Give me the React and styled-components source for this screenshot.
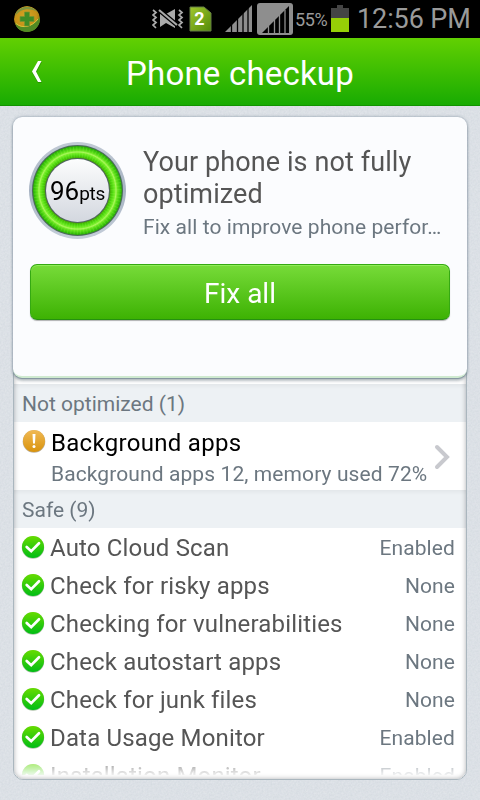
import React from "react";
import styled, { createGlobalStyle } from "styled-components";

const GlobalStyle = createGlobalStyle`
  * {
    box-sizing: border-box;
  }
  body {
    margin: 0;
    font-family: Roboto, "Noto Sans", sans-serif;
  }
`;

const grain = `url("data:image/svg+xml,%3Csvg xmlns='http://www.w3.org/2000/svg' width='120' height='120'%3E%3Cfilter id='n'%3E%3CfeTurbulence type='fractalNoise' baseFrequency='.55' numOctaves='2' stitchTiles='stitch'/%3E%3CfeColorMatrix values='0 0 0 0 .45 0 0 0 0 .52 0 0 0 0 .58 .5 0 0 0 -.1'/%3E%3C/filter%3E%3Crect width='120' height='120' filter='url(%23n)' opacity='.7'/%3E%3C/svg%3E")`;

const Screen = styled.div`
  width: 480px;
  height: 800px;
  overflow: hidden;
  display: flex;
  flex-direction: column;
  background: ${grain} #e0e4e9;
`;

const StatusBar = styled.div`
  flex: none;
  height: 38px;
  display: flex;
  align-items: center;
  padding: 0 10px 0 14px;
  background: #000;
  color: #9a9a9a;

  svg {
    flex: none;
    display: block;
  }
`;

const StatusIcons = styled.div`
  display: flex;
  align-items: center;
  margin-left: auto;
`;

const Gap = styled.div`
  width: ${(props) => props.$size}px;
`;

const BatteryText = styled.span`
  width: 38px;
  font-size: 18px;
  line-height: 38px;
  letter-spacing: -0.4px;
  padding: 2px 0 0 2px;
`;

const Clock = styled.span`
  width: 113px;
  margin-left: 8px;
  font-size: 27px;
  line-height: 38px;
  white-space: nowrap;
  letter-spacing: -0.1px;
`;

const Header = styled.header`
  flex: none;
  height: 68px;
  display: grid;
  grid-template-columns: 74px 332px 74px;
  align-items: center;
  background: linear-gradient(#62d002, #18ab02);
  border-bottom: 1px solid #129300;

  svg {
    margin: 0 0 0 30px;
  }
`;

const Title = styled.h1`
  margin: 0;
  padding-top: 5px;
  color: #fff;
  font-size: 33px;
  font-weight: 400;
  line-height: 40px;
  text-align: center;
  white-space: nowrap;
  letter-spacing: 0.2px;
`;

const Card = styled.section`
  flex: none;
  position: relative;
  z-index: 1;
  height: 261px;
  margin: 11px 13px 0;
  padding: 25px 17px 0;
  background: #fbfcfe;
  border-radius: 9px;
  border-bottom: 2px solid #cfead0;
  box-shadow: 0 1px 0 #8798a2, 0 0 3px rgba(90, 110, 130, 0.65),
    0 3px 3px rgba(60, 80, 90, 0.35);
`;

const Summary = styled.div`
  display: flex;
  height: 122px;
`;

const Score = styled.div`
  flex: none;
  width: 97px;
  height: 97px;
  display: grid;
  margin-left: -1px;

  > * {
    grid-area: 1 / 1;
  }
`;

const ScoreText = styled.div`
  display: flex;
  align-items: baseline;
  justify-content: center;
  align-self: center;
  color: #000;
  font-size: 26px;
  line-height: 30px;
  padding-top: 4px;

  small {
    font-size: 19px;
    letter-spacing: -0.3px;
  }
`;

const Message = styled.div`
  min-width: 0;
  margin-left: 17px;
`;

const Headline = styled.h2`
  margin: 4px 0 0;
  color: #555;
  font-size: 27px;
  font-weight: 400;
  line-height: 32px;
  letter-spacing: 0.1px;
`;

const Hint = styled.p`
  margin: 5px 0 0;
  color: #6c7780;
  font-size: 21px;
  line-height: 24px;
  white-space: nowrap;
  letter-spacing: 0.07px;
`;

const FixButton = styled.button`
  display: block;
  width: 420px;
  height: 56px;
  padding: 3px 0 0;
  border: 1px solid #35a912;
  border-bottom-color: #259010;
  border-radius: 7px;
  background: linear-gradient(#77db39, #3db203);
  box-shadow: inset 0 1px 0 #8fec58, 0 1px 1px rgba(0, 0, 0, 0.3);
  color: #fff;
  font: 28px Roboto, sans-serif;
  letter-spacing: 0;
`;

const Panel = styled.section`
  flex: none;
  position: relative;
  width: 454px;
  height: 410px;
  margin: -8px 13px 0;
  padding: 13px 0 0;
  overflow: hidden;
  background: #fff;
  border: 1px solid #aab6be;
  border-radius: 0 0 10px 10px;

  &::after {
    content: "";
    position: absolute;
    inset: 0;
    border-radius: 0 0 9px 9px;
    box-shadow: inset 0 0 5px rgba(70, 75, 80, 0.45);
  }
`;

const List = styled.div`
  height: 391px;
  overflow: hidden;
  mask-image: linear-gradient(#000 368px, transparent 393px);
`;

const SectionHeader = styled.h3`
  height: 38px;
  margin: 0;
  padding: 3px 8px 0;
  background: linear-gradient(#e3e7ea, #edf1f4 5px);
  color: #6c7780;
  font-size: 21px;
  font-weight: 400;
  line-height: 35px;
  letter-spacing: 0;
`;

const IssueRow = styled.div`
  display: flex;
  height: 68px;
  padding: 7px 16px 0 8px;

  > svg {
    flex: none;
  }
`;

const IssueText = styled.div`
  flex: 1;
  min-width: 0;
  margin: -1px 0 0 5px;
  white-space: nowrap;
`;

const IssueName = styled.div`
  color: #000;
  font-size: 24px;
  line-height: 30px;
  letter-spacing: 0.3px;
`;

const IssueDetail = styled.div`
  color: #6c7780;
  font-size: 21px;
  line-height: 32px;
  letter-spacing: 0.1px;
`;

const IssueArrow = styled.svg`
  margin-top: 15px;
`;

const SafeRow = styled.div`
  display: flex;
  align-items: center;
  height: 38px;
  padding: 0 11px 0 7px;
`;

const SafeName = styled.span`
  flex: 1;
  margin-left: 5px;
  padding-top: 1px;
  color: #555;
  font-size: 24px;
  line-height: 32px;
  letter-spacing: 0.16px;
`;

const SafeState = styled.span`
  padding-top: 2px;
  color: #6c7780;
  font-size: 21px;
  line-height: 32px;
  letter-spacing: 0.1px;
`;

const safeItems = [
  { name: "Auto Cloud Scan", state: "Enabled" },
  { name: "Check for risky apps", state: "None" },
  { name: "Checking for vulnerabilities", state: "None" },
  { name: "Check autostart apps", state: "None" },
  { name: "Check for junk files", state: "None" },
  { name: "Data Usage Monitor", state: "Enabled" },
  { name: "Installation Monitor", state: "Enabled" },
];

const ShieldIcon = () => (
  <svg width="26" height="26" viewBox="0 0 26 26">
    <defs>
      <radialGradient id="gold" cx=".45" cy=".4" r=".6">
        <stop offset="0" stopColor="#d3a526" />
        <stop offset=".7" stopColor="#c69117" />
        <stop offset="1" stopColor="#8b7814" />
      </radialGradient>
      <clipPath id="ball">
        <circle cx="13" cy="13" r="13" />
      </clipPath>
    </defs>
    <g clipPath="url(#ball)">
      <circle cx="13" cy="13" r="13" fill="url(#gold)" />
      <path d="M1 10C3 0 16-3 24 6C15 1 6 3 1 10Z" fill="#7f9440" />
      <path d="M1 17C7 24 18 22 26 11V27H4Z" fill="#518b24" />
      <path d="M2 17.500C8 23 18 21 24 13" fill="none" stroke="#d8c43c" />
      <path
        d="M10.500 6h5v4.500h4.500v5h-4.500V20h-5v-4.500H6v-5h4.500Z"
        fill="#3f8c25"
        stroke="#7b9430"
        strokeWidth=".7"
      />
    </g>
  </svg>
);

const MutedIcon = () => (
  <svg width="33" height="22" viewBox="0 0 33 22">
    <g fill="none" stroke="#aaa" strokeWidth="1.7">
      <path d="M1 2l3 2.500L1 7l3 2.500L1 12l3 2.500L1 17l3 3" />
      <path d="M27 2l3 2.500L27 7l3 2.500L27 12l3 2.500L27 17l3 3" />
    </g>
    <path d="M8 6h6l9-5v19l-9-5-6 4Z" fill="#aaa" />
    <path d="M7 2l18 15" stroke="#000" strokeWidth="4.500" />
    <path d="M7 2l18 15" stroke="#aaa" strokeWidth="2.200" />
  </svg>
);

const SimIcon = () => (
  <svg width="23" height="26" viewBox="0 0 23 26">
    <defs>
      <linearGradient id="sim" x2="1" y2="1">
        <stop stopColor="#a1c72d" />
        <stop offset="1" stopColor="#548b08" />
      </linearGradient>
    </defs>
    <path d="M1 1h14l7 6v18H1Z" fill="url(#sim)" stroke="#657c46" />
    <text x="10.500" y="19" textAnchor="middle" fill="#fff" fontSize="18" fontWeight="700">
      2
    </text>
  </svg>
);

const SignalIcon = () => (
  <svg width="28" height="28" viewBox="0 0 28 28">
    <path d="M0 27L27 0v27Z" fill="#8e8e8e" />
    <path d="M6.500 19v9M12.500 13v15M18 7v21M23 3v25" stroke="#000" strokeWidth="1.300" />
  </svg>
);

const SignalBoxIcon = () => (
  <svg width="36" height="32" viewBox="0 0 36 32">
    <rect width="36" height="32" rx="3" fill="#8e8e8e" />
    <path d="M5 30L32 3v27Z" fill="#000" />
    <path d="M11.500 23v7M17.500 17v13M22.500 12v18M28 7v23" stroke="#8e8e8e" strokeWidth="1.300" />
  </svg>
);

const BatteryIcon = () => (
  <svg width="18" height="28" viewBox="0 0 18 28">
    <path d="M6 0h6v3h6v10H0V3h6Z" fill="#444" />
    <path d="M0 13h18v14H0Z" fill="#96cf06" />
  </svg>
);

const BackIcon = () => (
  <svg width="14" height="24" viewBox="0 0 14 24">
    <path d="M8 2h4L6.500 12.500 12 23H8L2 12.500Z" fill="#238300" opacity=".6" />
    <path d="M8 1H11.500L6 11.500 11.500 22H8L2 11.500Z" fill="#fff" />
  </svg>
);

const Ring = () => (
  <svg width="97" height="97" viewBox="0 0 97 97">
    <defs>
      <linearGradient id="rim" x2="0" y2="1">
        <stop stopColor="#c1cad5" />
        <stop offset=".5" stopColor="#a6b2c2" />
        <stop offset="1" stopColor="#c5ceda" />
      </linearGradient>
      <linearGradient id="face" x2="0" y2="1">
        <stop stopColor="#fcfdfd" />
        <stop offset="1" stopColor="#d3d7df" />
      </linearGradient>
      <radialGradient id="glow" gradientUnits="userSpaceOnUse" cx="48.500" cy="48.500" r="45">
        <stop offset=".7" stopColor="#419500" />
        <stop offset=".77" stopColor="#48d40a" />
        <stop offset=".83" stopColor="#75ee27" />
        <stop offset=".855" stopColor="#aaf65b" />
        <stop offset=".89" stopColor="#65e41c" />
        <stop offset=".96" stopColor="#32bd08" />
        <stop offset="1" stopColor="#259900" />
      </radialGradient>
    </defs>
    <circle cx="48.500" cy="48.500" r="48.500" fill="url(#rim)" />
    <circle cx="48.500" cy="48.500" r="45.500" fill="#4c6b5c" />
    <circle cx="48.500" cy="48.500" r="44.500" fill="url(#glow)" />
    <circle
      cx="48.500"
      cy="48.500"
      r="38.500"
      fill="none"
      stroke="#b5ff70"
      strokeWidth="11"
      strokeDasharray="1 2"
      opacity=".18"
    />
    <circle cx="48.500" cy="48.500" r="32.500" fill="#526463" />
    <circle cx="48.500" cy="48.500" r="31.500" fill="url(#face)" />
  </svg>
);

const WarningIcon = () => (
  <svg width="24" height="26" viewBox="0 0 24 26">
    <defs>
      <linearGradient id="amber" x2="0" y2="1">
        <stop stopColor="#f0b955" />
        <stop offset="1" stopColor="#d9930c" />
      </linearGradient>
    </defs>
    <circle cx="12" cy="12.500" r="11.300" fill="#826b49" opacity=".55" />
    <circle cx="12" cy="12" r="11" fill="url(#amber)" />
    <path d="M10.500 5h3l-.5 9.500h-2Z" fill="#fff" />
    <circle cx="12" cy="17.500" r="1.500" fill="#fff" />
  </svg>
);

const CheckIcon = () => (
  <svg width="24" height="24" viewBox="0 0 24 24">
    <defs>
      <linearGradient id="green" x2="0" y2="1">
        <stop stopColor="#66dc00" />
        <stop offset="1" stopColor="#00bd15" />
      </linearGradient>
    </defs>
    <circle cx="12" cy="12.500" r="11.200" fill="#57804c" opacity=".5" />
    <circle cx="12" cy="12" r="11" fill="url(#green)" />
    <path
      d="M5.700 11.900l4.500 4.300 7.800-8"
      fill="none"
      stroke="#fff"
      strokeWidth="2.700"
      strokeLinecap="round"
    />
  </svg>
);

const ArrowIcon = () => (
  <IssueArrow width="16" height="26" viewBox="0 0 16 26">
    <path
      d="M3 3l10 10L3 23"
      fill="none"
      stroke="#c8c9ce"
      strokeWidth="4"
      strokeLinecap="round"
    />
  </IssueArrow>
);

const App = () => {
  return (
    <Screen>
      <GlobalStyle />
      <StatusBar>
        <ShieldIcon />
        <StatusIcons>
          <MutedIcon />
          <Gap $size={4} />
          <SimIcon />
          <Gap $size={13} />
          <SignalIcon />
          <Gap $size={4} />
          <SignalBoxIcon />
          <BatteryText>55%</BatteryText>
          <BatteryIcon />
        </StatusIcons>
        <Clock>12:56 PM</Clock>
      </StatusBar>
      <Header>
        <BackIcon />
        <Title>Phone checkup</Title>
      </Header>
      <Card>
        <Summary>
          <Score>
            <Ring />
            <ScoreText>
              96<small>pts</small>
            </ScoreText>
          </Score>
          <Message>
            <Headline>
              Your phone is not fully
              <br />
              optimized
            </Headline>
            <Hint>Fix all to improve phone perfor…</Hint>
          </Message>
        </Summary>
        <FixButton>Fix all</FixButton>
      </Card>
      <Panel>
        <List>
          <SectionHeader>Not optimized (1)</SectionHeader>
          <IssueRow>
            <WarningIcon />
            <IssueText>
              <IssueName>Background apps</IssueName>
              <IssueDetail>Background apps 12, memory used 72%</IssueDetail>
            </IssueText>
            <ArrowIcon />
          </IssueRow>
          <SectionHeader>Safe (9)</SectionHeader>
          {safeItems.map((item) => (
            <SafeRow key={item.name}>
              <CheckIcon />
              <SafeName>{item.name}</SafeName>
              <SafeState>{item.state}</SafeState>
            </SafeRow>
          ))}
        </List>
      </Panel>
    </Screen>
  );
};

export default App;
